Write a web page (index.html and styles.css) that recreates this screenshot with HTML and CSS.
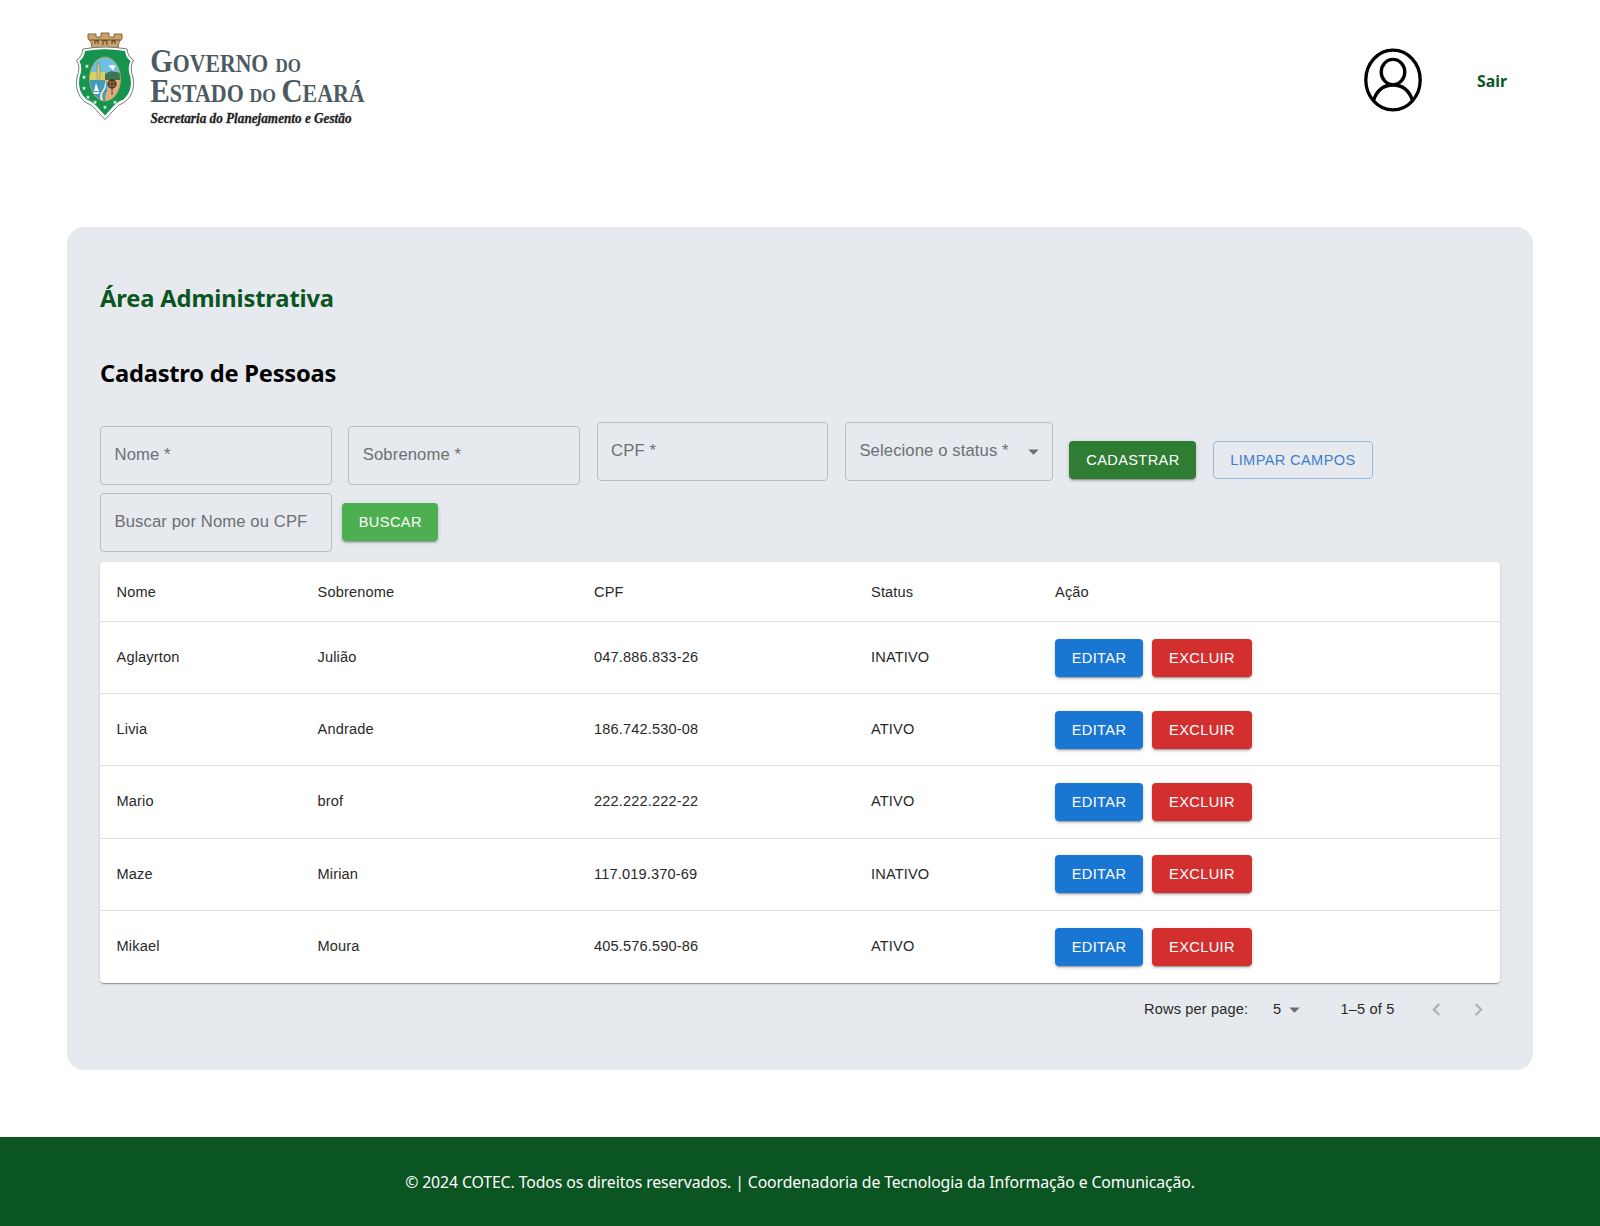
FILE: index.html
```html
<!DOCTYPE html>
<html lang="pt-BR">
<head>
<meta charset="utf-8">
<title>Cadastro de Pessoas</title>
<link rel="stylesheet" href="styles.css">
</head>
<body>
<header class="header">
  <svg class="logo" width="320" height="120" viewBox="0 0 320 120" role="img" aria-label="Governo do Estado do Ceará">
    <!-- crown -->
    <path d="M28 14h8v3h5v-4h8v4h5v-3h8v5l-3 3-1 6H32l-1-6-3-3z" fill="#c9a36b" stroke="#8a6439" stroke-width="1"/>
    <path d="M30 20h30M35 24v-3h3v3M43 25v-4h4v4M52 24v-3h3v3" fill="none" stroke="#6e4b28" stroke-width="1.2"/>
    <!-- shield -->
    <path d="M23 29Q45 25 67 29Q68 37 73.500 40Q69 47 73 57Q76 73 65 82Q58 84 52 92L45 99.500L38 92Q32 84 25 82Q14 73 17 57Q21 47 16.500 40Q22 37 23 29Z" fill="#fff" stroke="#747a78" stroke-width="1"/>
    <path d="M25 31Q45 27.500 65 31Q66 38 70.500 41Q67 48 70.500 57Q73 71 63.500 79.500Q56 82 50 90L45 95.500L40 90Q34 82 26.500 79.500Q17 71 19.500 57Q23 48 19.500 41Q24 38 25 31Z" fill="#16934f"/>
    <clipPath id="oval"><ellipse cx="45" cy="59" rx="15.500" ry="22"/></clipPath>
    <g clip-path="url(#oval)">
      <path d="M29 36h32v46H29z" fill="#6fc0df"/>
      <path d="M29 52h16v8H29z" fill="#d9cf62"/>
      <path d="M45 54l6-3 10 2v7H45z" fill="#3f7650"/>
      <path d="M29 60h18v22H29z" fill="#3f9cbb"/>
      <path d="M44 60h18v23H47q-4-5 0-12t-3-11z" fill="#dfae7c"/>
      <path d="M45 60q3 5-1 11t1 12h-3q-4-7 0-12t3-11z" fill="#f3e6c9"/>
      <path d="M37 59V47l1.500-5 1.500 5v12z" fill="#d5c886" stroke="#88864f" stroke-width=".6"/>
      <path d="M48 46l4-1 4 1-2 2v3l-3-3z" fill="#fff"/>
      <path d="M36 63l3 8h-5zM33 72h7l-2 2h-4z" fill="#fff"/>
      <circle cx="52" cy="64" r="4" fill="#98683e" stroke="#49301f" stroke-width="1.300"/>
      <path d="M52 68v7M48 64h8M52 60v8" stroke="#49301f" stroke-width=".9"/>
    </g>
    <ellipse cx="45" cy="59" rx="15.500" ry="22" fill="none" stroke="#b9a851" stroke-width=".8"/>
    <g fill="#e6f6df">
      <path id="star" d="M27 44l.6 1.500 1.600.1-1.200 1 .4 1.600-1.400-.9-1.400.9.4-1.600-1.200-1 1.600-.1z"/>
      <use href="#star" x="-3" y="11"/><use href="#star" x="-3" y="22"/><use href="#star" x="1" y="31"/>
      <use href="#star" x="8" y="36"/><use href="#star" x="18" y="41"/><use href="#star" x="28" y="36"/>
    </g>
    <g class="logo-name">
      <text x="90.300" y="51.700" textLength="118" lengthAdjust="spacingAndGlyphs"><tspan font-size="34">G</tspan><tspan font-size="25.500">OVERNO</tspan></text>
      <text x="215.500" y="51.700" font-size="18.500" textLength="25.500" lengthAdjust="spacingAndGlyphs">DO</text>
      <text x="90.300" y="81.700" textLength="93.500" lengthAdjust="spacingAndGlyphs"><tspan font-size="34">E</tspan><tspan font-size="25.500">STADO</tspan></text>
      <text x="189.500" y="81.700" font-size="18.500" textLength="26.500" lengthAdjust="spacingAndGlyphs">DO</text>
      <text x="221.500" y="81.700" textLength="83" lengthAdjust="spacingAndGlyphs"><tspan font-size="34">C</tspan><tspan font-size="25.500">EARÁ</tspan></text>
    </g>
    <text class="logo-dept" x="90.500" y="102.500" textLength="201" lengthAdjust="spacingAndGlyphs">Secretaria do Planejamento e Gestão</text>
  </svg>
  <div class="account">
    <svg width="58" height="64" viewBox="0 0 58 64" fill="none" stroke="#000" stroke-width="3.300">
      <ellipse cx="29" cy="32" rx="27.200" ry="29.800"/>
      <ellipse cx="29" cy="24" rx="11.800" ry="12.700"/>
      <path d="M9.500 52.500C13 42 20 37 29 37s16 5 19.500 15.500"/>
    </svg>
    <a class="logout">Sair</a>
  </div>
</header>

<main class="panel">
  <h1 class="area-title">Área Administrativa</h1>
  <h2 class="page-title">Cadastro de Pessoas</h2>
  <form class="form-row">
    <div class="field low">Nome *</div>
    <div class="field low">Sobrenome *</div>
    <div class="field">CPF *</div>
    <div class="field select">Selecione o status *<svg class="caret" width="25" height="25" viewBox="0 0 24 24"><path d="M7 10l5 5 5-5z"/></svg></div>
    <span class="btn green">CADASTRAR</span>
    <span class="btn outlined">LIMPAR CAMPOS</span>
  </form>
  <div class="search-row">
    <div class="field">Buscar por Nome ou CPF</div>
    <span class="btn light-green">BUSCAR</span>
  </div>
  <section class="table">
    <div class="row head"><span>Nome</span><span>Sobrenome</span><span>CPF</span><span>Status</span><span>Ação</span></div>
    <div class="row"><span>Aglayrton</span><span>Julião</span><span>047.886.833-26</span><span>INATIVO</span><div class="actions"><span class="btn blue">EDITAR</span><span class="btn red">EXCLUIR</span></div></div>
    <div class="row"><span>Livia</span><span>Andrade</span><span>186.742.530-08</span><span>ATIVO</span><div class="actions"><span class="btn blue">EDITAR</span><span class="btn red">EXCLUIR</span></div></div>
    <div class="row"><span>Mario</span><span>brof</span><span>222.222.222-22</span><span>ATIVO</span><div class="actions"><span class="btn blue">EDITAR</span><span class="btn red">EXCLUIR</span></div></div>
    <div class="row"><span>Maze</span><span>Mirian</span><span>117.019.370-69</span><span>INATIVO</span><div class="actions"><span class="btn blue">EDITAR</span><span class="btn red">EXCLUIR</span></div></div>
    <div class="row"><span>Mikael</span><span>Moura</span><span>405.576.590-86</span><span>ATIVO</span><div class="actions"><span class="btn blue">EDITAR</span><span class="btn red">EXCLUIR</span></div></div>
  </section>
  <div class="pagination">
    <span class="rows-label">Rows per page:</span>
    <span class="rows-count">5</span>
    <svg class="caret" width="25" height="25" viewBox="0 0 24 24"><path d="M7 10l5 5 5-5z"/></svg>
    <span class="range">1–5 of 5</span>
    <svg class="chevron" width="25" height="25" viewBox="0 0 24 24"><path d="M15.410 16.590L10.830 12l4.580-4.590L14 6l-6 6 6 6z"/></svg>
    <svg class="chevron" width="25" height="25" viewBox="0 0 24 24"><path d="M8.590 16.590L13.170 12 8.590 7.410 10 6l6 6-6 6z"/></svg>
  </div>
</main>

<footer class="footer"><p class="copyright">© 2024 COTEC. Todos os direitos reservados. | Coordenadoria de Tecnologia da Informação e Comunicação.</p></footer>
</body>
</html>
```
FILE: styles.css
```css
* { box-sizing: border-box; }
body { margin: 0; background: #fff; font-family: "Segoe UI", "Noto Sans", sans-serif; }

.header { height: 227px; padding: 20px 93px 0 60px; display: flex; justify-content: space-between; align-items: flex-start; }
.logo { display: block; }
.logo-name { font-family: "Liberation Serif", serif; font-weight: 700; fill: #4c5a61; }
.logo-dept { font: italic bold 15px "Liberation Serif", serif; fill: #222; stroke: #222; stroke-width: .3; }
.account { display: flex; align-items: center; gap: 55px; padding-top: 28px; }
.logout { color: #0b5522; font-size: 15.800px; font-weight: 700; line-height: 24px; padding-top: 2px; }

.panel { width: 1466px; height: 843px; margin: 0 auto; padding: 54px 33px 0; border-radius: 17px; background: #e6e9ee; font-family: "Liberation Sans", Arial, sans-serif; }
.area-title, .page-title { margin: 0; height: 34px; line-height: 34px; font-family: "Segoe UI", "Noto Sans", sans-serif; font-size: 23.700px; font-weight: 700; }
.area-title { color: #0b5522; letter-spacing: -.14px; }
.page-title { margin-top: 41px; color: #000; letter-spacing: -.23px; }

.form-row { display: flex; align-items: flex-start; gap: 16.500px; height: 71px; margin: 32px 0 0; }
.field { width: 231.800px; height: 58.500px; flex: none; padding: 0 13.500px; border: 1px solid #b9bcc1; border-radius: 4px; color: #6d7073; font-size: 16.670px; line-height: 55px; letter-spacing: .1px; white-space: nowrap; }
.low { margin-top: 4px; }
.select { width: 208px; display: flex; justify-content: space-between; padding-right: 6px; }
.caret { fill: #6b6e71; flex: none; }
.select .caret { margin-top: 16px; }

.btn { display: block; flex: none; height: 38px; padding: 0 16px; border-radius: 4px; color: #fff; font-size: 14.580px; line-height: 38px; letter-spacing: .38px; white-space: nowrap; text-align: center; box-shadow: 0 3px 1px -2px #0003, 0 2px 2px #00000024, 0 1px 5px #0000001f; }
.green { width: 127px; background: #2e7d32; }
.light-green { width: 96px; background: #4caf50; }
.blue { width: 88px; background: #1976d2; }
.red { width: 100px; background: #d32f2f; }
.outlined { width: 160px; line-height: 36px; color: #3f7fce; border: 1px solid #98b7dc; box-shadow: none; }
.form-row .btn { margin-top: 18.500px; }

.search-row { display: flex; align-items: center; gap: 10.500px; height: 58.500px; }

.table { margin-top: 10.500px; border-radius: 4px; background: #fff; box-shadow: 0 2px 1px -1px #0003, 0 1px 1px #00000024, 0 1px 3px #0000001f; }
.row { display: grid; grid-template-columns: 201px 276.500px 277px 184px 1fr; align-items: center; height: 72.200px; padding-left: 16.500px; border-bottom: 1px solid #e0e0e0; color: #292929; font-size: 14.580px; letter-spacing: .156px; }
.row > span { padding-bottom: 1.300px; }
.head { height: 60px; }
.head > span { padding-bottom: 0; }
.row:last-child { border-bottom: 0; }
.actions { display: flex; gap: 9px; }

.pagination { display: flex; align-items: center; height: 53px; color: #292929; font-size: 14.580px; letter-spacing: .156px; padding-left: 1044px; }
.rows-label { width: 129px; }
.rows-count { width: 8.500px; padding-bottom: 1px; flex: none; }
.range { margin-left: 34px; width: 83px; }
.chevron { fill: #acafb2; margin-right: 17px; flex: none; }
.rows-label, .range { flex: none; }

.footer { margin-top: 67px; height: 89px; padding-top: 32px; background: #0b5522; color: #fff; text-align: center; }
.copyright { margin: 0; font-size: 15.800px; line-height: 26px; letter-spacing: -.1px; }
```
